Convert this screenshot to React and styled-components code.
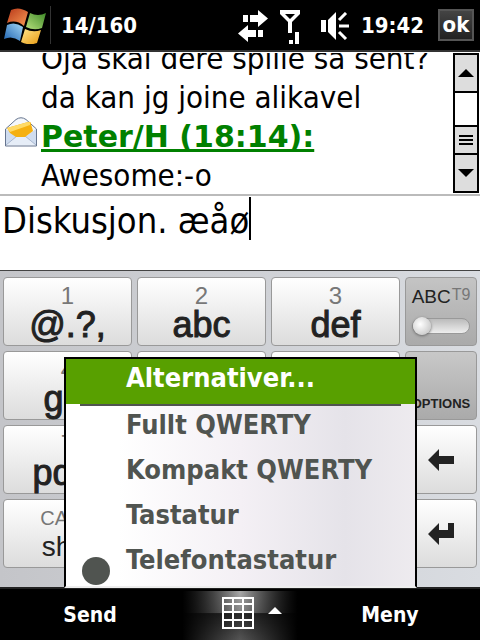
import { useState } from "react";
import styled, { createGlobalStyle } from "styled-components";

const KEYS = [
  { top: "1", main: "@.?," },
  { top: "2", main: "abc" },
  { top: "3", main: "def" },
  { top: "4", main: "ghi" },
  { top: "5", main: "jkl" },
  { top: "6", main: "mno" },
  { top: "7", main: "pqrs" },
  { top: "8", main: "tuv" },
  { top: "9", main: "wxyz" },
  { top: "CAPS", main: "shift", small: true },
  { top: "0", main: "+" },
  { top: "SYM", main: "space", small: true },
];

const LAYOUTS = ["Fullt QWERTY", "Kompakt QWERTY", "Tastatur", "Telefontastatur"];

export default function App() {
  const [text, setText] = useState("Diskusjon. æåø");
  const [layout, setLayout] = useState("Telefontastatur");

  return (
    <Screen>
      <GlobalStyle />
      <StatusBar>
        <StartButton aria-label="Start">
          <WindowsLogo />
        </StartButton>
        <Counter>14/160</Counter>
        <StatusIcons />
        <Clock>19:42</Clock>
        <OkButton>ok</OkButton>
      </StatusBar>

      <Thread>
        <Messages>
          <Line>Oja skal dere spille så sent?</Line>
          <Line>da kan jg joine alikavel</Line>
          <SenderLine>
            <MailIcon />
            <Sender href="#peter">Peter/H (18:14):</Sender>
          </SenderLine>
          <Line>Awesome:-o</Line>
        </Messages>
        <ScrollBar>
          <ScrollButton aria-label="Scroll up">
            <svg width="16" height="8" viewBox="0 0 16 8">
              <path d="M8 0L16 8H0Z" />
            </svg>
          </ScrollButton>
          <ScrollTrack />
          <ScrollThumb aria-label="Scroll position">
            <svg width="14" height="10" viewBox="0 0 14 10">
              <path d="M0 0h14v2H0zM0 4h14v2H0zM0 8h14v2H0z" />
            </svg>
          </ScrollThumb>
          <ScrollButton aria-label="Scroll down">
            <svg width="16" height="8" viewBox="0 0 16 8">
              <path d="M8 8L16 0H0Z" />
            </svg>
          </ScrollButton>
        </ScrollBar>
      </Thread>

      <Compose>
        <MessageInput
          aria-label="Message"
          value={text}
          onChange={(e) => setText(e.target.value)}
        />
        <Caret />
      </Compose>

      <Keyboard>
        <LetterKeys>
          {KEYS.map((key) => (
            <Key key={key.top}>
              <KeyTop $small={key.small}>{key.top}</KeyTop>
              <KeyMain $small={key.small}>{key.main}</KeyMain>
            </Key>
          ))}
        </LetterKeys>
        <SideKeys>
          <ModeKey>
            <ModeNames>
              <span>ABC</span>
              <ModeOff>T9</ModeOff>
            </ModeNames>
            <Toggle type="checkbox" />
          </ModeKey>
          <OptionsKey>OPTIONS</OptionsKey>
          <Key aria-label="Backspace">
            <svg width="26" height="22" viewBox="0 0 26 22">
              <path d="M0 11L11 0v7h15v8H11v7z" fill="#222" />
            </svg>
          </Key>
          <Key aria-label="Enter">
            <svg width="26" height="22" viewBox="0 0 26 22">
              <path d="M0 11L11 0v7h9V0h6v15H11v7z" fill="#222" />
            </svg>
          </Key>
        </SideKeys>
      </Keyboard>

      <Menu>
        <MenuAction>Alternativer...</MenuAction>
        <Separator />
        {LAYOUTS.map((name) => (
          <MenuOption key={name}>
            <Radio
              type="radio"
              name="layout"
              checked={layout === name}
              onChange={() => setLayout(name)}
            />
            {name}
          </MenuOption>
        ))}
      </Menu>

      <SoftKeys>
        <SoftKey>Send</SoftKey>
        <PanelButton aria-label="Keyboard">
          <svg width="32" height="32" viewBox="0 0 32 32">
            <path
              d="M1 1h30v30H1zM1 7h30M1 15h30M1 23h30M11 1v30M21 1v30"
              fill="none"
              stroke="#fff"
              strokeWidth="2"
            />
          </svg>
          <svg width="14" height="12" viewBox="0 0 14 12">
            <path d="M7 0L14 7H0z" fill="#fff" />
          </svg>
        </PanelButton>
        <SoftKey>Meny</SoftKey>
      </SoftKeys>
    </Screen>
  );
}

function WindowsLogo() {
  return (
    <svg width="42" height="38" viewBox="0 0 42 38">
      <defs>
        <linearGradient id="red" x1="0" y1="0" x2="1" y2="1">
          <stop offset="0" stopColor="#b8391a" />
          <stop offset="1" stopColor="#f89a55" />
        </linearGradient>
        <linearGradient id="green" x1="0" y1="1" x2="1" y2="0">
          <stop offset="0" stopColor="#b5de7c" />
          <stop offset="1" stopColor="#3f8a28" />
        </linearGradient>
        <linearGradient id="blue" x1="1" y1="0" x2="0" y2="1">
          <stop offset="0" stopColor="#a4d8f6" />
          <stop offset="1" stopColor="#1d62b0" />
        </linearGradient>
        <linearGradient id="yellow" x1="0" y1="0" x2="1" y2="1">
          <stop offset="0" stopColor="#ffe68a" />
          <stop offset="1" stopColor="#e99a12" />
        </linearGradient>
      </defs>
      <path d="M7 4Q15 0 24 6L20 20Q12 13 3 17Z" fill="url(#red)" />
      <path d="M26 7Q34 11 42 7L38 22Q30 25 22 21Z" fill="url(#green)" />
      <path d="M3 19Q11 15 19 21L16 35Q8 29 0 33Z" fill="url(#blue)" />
      <path d="M21 23Q29 27 37 24L33 37Q25 40 17 36Z" fill="url(#yellow)" />
    </svg>
  );
}

function StatusIcons() {
  return (
    <IconGroup>
      <svg width="30" height="34" viewBox="0 0 30 34">
        <path
          d="M5 5h5v7H5zM12 5h8V0l10 8.500L20 17v-5h-8zM10 15v5h8v7h-8v5L0 23.500zM20 20h5v7h-5z"
          fill="#fff"
        />
      </svg>
      <svg width="20" height="34" viewBox="0 0 20 34">
        <path
          d="M0 0h20v4l-8 8v11H8V12L0 4zM5 4l5 5 5-5zM9 30h4v4H9zM15 22h4v12h-4z"
          fill="#fff"
          fillRule="evenodd"
        />
      </svg>
      <svg width="28" height="28" viewBox="0 0 28 28">
        <path d="M0 8h5v12H0zM7 8l8-8v28l-8-8z" fill="#fff" />
        <path d="M18 8l7-7M18 14h10M18 20l7 7" stroke="#fff" strokeWidth="3" />
      </svg>
    </IconGroup>
  );
}

function MailIcon() {
  return (
    <svg width="32" height="30" viewBox="0 0 32 30">
      <path
        d="M0.500 12L11 2.500Q16-1 21 2.500L31.500 12V29H0.500Z"
        fill="#f4f7fb"
        stroke="#66758f"
      />
      <path d="M1 12L12 20H20L31 12V28H1Z" fill="#cfdcef" />
      <path d="M1 28L12 19H20L31 28" fill="#e6edf7" stroke="#a9b7cf" />
      <path d="M2 11L23 5Q26 4 26 7L28 14L20 20H11L5 16Z" fill="#f5b010" />
      <path d="M2 11L23 5Q26 5 25 8L5 15Z" fill="#ffda66" />
    </svg>
  );
}

const GlobalStyle = createGlobalStyle`
  * {
    box-sizing: border-box;
  }

  body {
    margin: 0;
    background: #fff;
    font-family: "DejaVu Sans Condensed", "DejaVu Sans", sans-serif;
  }

  button {
    border: none;
    padding: 0;
    margin: 0;
    font: inherit;
    color: inherit;
    background: none;
  }

  svg {
    display: block;
    flex: none;
  }
`;

const Screen = styled.div`
  position: relative;
  display: flex;
  flex-direction: column;
  min-height: 100vh;
`;

const StatusBar = styled.header`
  display: flex;
  align-items: center;
  height: 52px;
  padding: 0 6px 0 4px;
  background: #000;
  border-bottom: 2px solid #333;
  color: #fff;
  font-size: 22px;
  font-weight: bold;
`;

const StartButton = styled.button`
  padding-right: 4px;
  border-right: 1px solid #333;
`;

const Counter = styled.span`
  padding-left: 10px;
`;

const IconGroup = styled.div`
  display: flex;
  align-items: center;
  gap: 12px;
  margin-left: auto;
  padding: 3px 12px 0 0;

  svg:last-child {
    margin: 0 0 2px 9px;
  }
`;

const Clock = styled.span`
  padding-right: 14px;
`;

const OkButton = styled.button`
  width: 36px;
  height: 32px;
  border: 2px solid #555;
  background: linear-gradient(#444, #222);
  font-size: 22px;
  line-height: 28px;
`;

const Thread = styled.main`
  display: flex;
  height: 144px;
  padding: 1px 1px 1px 5px;
  border-bottom: 2px solid #bbb;
  background: #fff;
`;

const Messages = styled.div`
  flex: 1;
  display: flex;
  flex-direction: column;
  justify-content: flex-end;
  margin-bottom: -2px;
  overflow: hidden;
  font-size: 31px;
  line-height: 39px;
  white-space: nowrap;
`;

const Line = styled.div`
  padding-left: 36px;
`;

const SenderLine = styled.div`
  display: flex;
  gap: 4px;
`;

const Sender = styled.a`
  color: #008000;
  font-family: "DejaVu Sans", sans-serif;
  font-size: 30px;
  font-weight: bold;
  text-decoration-skip-ink: none;
  text-decoration-thickness: 3px;
  text-underline-offset: 2px;
`;

const ScrollBar = styled.div`
  display: flex;
  flex-direction: column;
  width: 26px;
  border: 2px solid #000;
`;

const ScrollButton = styled.button`
  display: flex;
  align-items: center;
  justify-content: center;
  height: 36px;
  background: #ddd;
`;

const ScrollTrack = styled.div`
  flex: 1;
  border-top: 2px solid #000;
`;

const ScrollThumb = styled(ScrollButton)`
  height: 30px;
  border-top: 2px solid #000;
  border-bottom: 2px solid #000;
`;

const Compose = styled.div`
  display: flex;
  align-items: flex-start;
  height: 74px;
  padding: 1px 2px;
`;

const MessageInput = styled.input`
  field-sizing: content;
  max-width: 100%;
  padding: 2px 0 0;
  border: none;
  outline: none;
  background: none;
  caret-color: transparent;
  font: inherit;
  font-size: 36px;
  line-height: 44px;
`;

const Caret = styled.span`
  width: 2px;
  height: 43px;
  background: #000;
`;

const Keyboard = styled.section`
  flex: 1;
  display: grid;
  grid-template-columns: 1fr 72px;
  align-items: start;
  gap: 5px;
  padding: 6px 3px 19px;
  border-top: 1px solid #444;
  background: linear-gradient(90deg, #c4c5c9, #d9dce1);
  font-family: "Liberation Sans", sans-serif;
`;

const LetterKeys = styled.div`
  display: grid;
  grid-template-columns: repeat(3, 1fr);
  grid-auto-rows: 69px;
  gap: 5px;
`;

const SideKeys = styled.div`
  display: grid;
  grid-template-columns: 100%;
  grid-auto-rows: 69px;
  gap: 5px;
`;

const Key = styled.button`
  display: flex;
  flex-direction: column;
  align-items: center;
  justify-content: center;
  min-width: 0;
  border: 1px solid #999;
  border-radius: 4px;
  background: linear-gradient(#fff, #dcdcdc);
  color: #222;
`;

const KeyTop = styled.span`
  color: #777;
  font-size: ${(p) => (p.$small ? "20px" : "24px")};
  line-height: 26px;
`;

const KeyMain = styled.span`
  font-size: ${(p) => (p.$small ? "28px" : "36px")};
  line-height: 32px;
  -webkit-text-stroke: ${(p) => (p.$small ? "0" : "1px #222")};
`;

const ModeKey = styled.label`
  display: flex;
  flex-direction: column;
  align-items: center;
  gap: 9px;
  padding-top: 7px;
  border: 1px solid #999;
  border-radius: 4px;
  background: linear-gradient(#c4c4c4, #aaa);
`;

const ModeNames = styled.span`
  display: flex;
  gap: 1px;
  color: #222;
  font-size: 19px;
  line-height: 24px;
`;

const ModeOff = styled.span`
  color: #777;
  font-size: 16px;
  line-height: 20px;
`;

const Toggle = styled.input`
  appearance: none;
  width: 58px;
  height: 16px;
  margin: 0;
  border: 1px solid #999;
  border-radius: 8px;
  background: linear-gradient(#bbb, #eee);

  &::before {
    content: "";
    display: block;
    width: 18px;
    height: 18px;
    margin-top: -2px;
    border-radius: 50%;
    background: radial-gradient(circle at 40% 40%, #fff, #bbb);
    box-shadow: 0 1px 3px #666;
  }
`;

const OptionsKey = styled(Key)`
  justify-content: flex-end;
  padding-bottom: 8px;
  background: linear-gradient(#c8c8c8, #aaa);
  font-size: 13px;
  font-weight: bold;
`;

const Menu = styled.div`
  position: absolute;
  left: 64px;
  right: 63px;
  bottom: 52px;
  display: flex;
  flex-direction: column;
  border: 2px solid #000;
  border-bottom-color: #eee;
  background: linear-gradient(90deg, #fff 15%, #f4f0f5 50%, #e5e3e9 80%, #eeebef);
  color: #505450;
  font-size: 27px;
  font-weight: bold;
`;

const MenuAction = styled.button`
  height: 45px;
  padding: 0 0 8px 60px;
  background: #58a000;
  color: #fff;
  line-height: 37px;
  text-align: left;
`;

const Separator = styled.hr`
  width: calc(100% - 28px);
  height: 2px;
  margin: 0 auto;
  border: none;
  background: #505450;
`;

const MenuOption = styled.label`
  display: flex;
  gap: 16px;
  height: 45px;
  padding-left: 16px;
  line-height: 38px;
`;

const Radio = styled.input`
  appearance: none;
  align-self: flex-end;
  width: 28px;
  height: 28px;
  margin: 0 0 1px;
  border-radius: 50%;

  &:checked {
    background: #505450;
  }
`;

const SoftKeys = styled.footer`
  display: grid;
  grid-template-columns: 3fr 2fr 3fr;
  height: 53px;
  border-top: 2px solid #222;
  background: #000;
  color: #fff;
  font-size: 21px;
  font-weight: bold;
`;

const SoftKey = styled.button`
  line-height: 50px;
`;

const PanelButton = styled.button`
  display: flex;
  align-items: center;
  justify-content: center;
  gap: 14px;
  margin-top: 2px;
  padding: 0 0 6px 24px;
  background:
    linear-gradient(90deg, #000 2%, transparent 50%, #000 98%),
    linear-gradient(transparent 45%, #2a2a2a 46%, #555),
    radial-gradient(circle at 50% 0, #aaa, #444 60px);
`;
